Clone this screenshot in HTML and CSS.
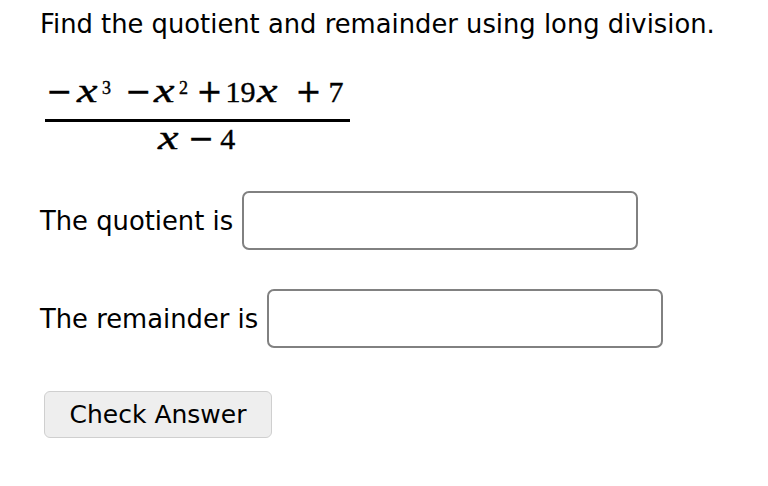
FILE: index.html
```html
<!DOCTYPE html>
<html>
<head>
<meta charset="utf-8">
<link rel="stylesheet" href="styles.css">
</head>
<body>
<div class="page">
  <p class="prompt">Find the quotient and remainder using long division.</p>
  <div class="frac">
    <div class="num">
      <span class="op">−</span>
      <span class="v">x</span>
      <span class="sup">3</span>
      <span class="op">−</span>
      <span class="v">x</span>
      <span class="sup">2</span>
      <span class="op">+</span>
      <span class="n">19</span>
      <span class="v">x</span>
      <span class="op">+</span>
      <span class="n">7</span>
    </div>
    <div class="den">
      <span class="v">x</span>
      <span class="op">−</span>
      <span class="n">4</span>
    </div>
  </div>
  <div class="row r1"><span class="label">The quotient is</span><input class="box" type="text"></div>
  <div class="row r2"><span class="label">The remainder is</span><input class="box" type="text"></div>
  <button class="check">Check Answer</button>
</div>
</body>
</html>
```
FILE: styles.css
```css
html, body { margin: 0; padding: 0; background: #fff; }
.page {
  padding: 7px 0 0 40px;
  font-family: "DejaVu Sans", sans-serif;
  color: #000;
}
.prompt { margin: 0; font-size: 25.8px; line-height: 34px; }
.frac {
  display: inline-flex;
  flex-direction: column;
  align-items: center;
  margin: 30px 0 0 5px;
  width: 305px;
  -webkit-text-stroke: 0.4px #000;
}
.num {
  display: grid;
  grid-template-columns: 30px 25.5px 23.5px 28px 25.5px 17.5px 29px 31px 39px 33px 20px;
  align-items: baseline;
  width: 305px;
  box-sizing: border-box;
  padding: 2px 0 5px 1.5px;
  border-bottom: 3px solid #000;
  line-height: 36px;
}
.den {
  display: grid;
  grid-template-columns: 30.5px 32px 17px;
  align-items: baseline;
  padding-top: 0;
  line-height: 33px;
}
.op { font-family: "DejaVu Serif", serif; font-size: 31px; }
.v {
  display: inline-block;
  font-family: "Liberation Serif", serif; font-style: italic; font-size: 33px;
  transform-origin: 0 100%;
  transform: scaleX(1.4);
}
.n { font-family: "Liberation Serif", serif; font-size: 30px; }
.sup {
  font-family: "Liberation Serif", serif; font-size: 18px;
  position: relative; top: -8px;
}
.row { display: flex; align-items: center; }
.label { font-size: 25.8px; margin-right: 9px; }
.box {
  width: 396px; height: 59px; box-sizing: border-box;
  border: 2px solid #818181; border-radius: 7px;
  margin: 0; padding: 0; background: #fff;
}
.r1 { margin-top: 36px; }
.r2 { margin-top: 39px; }
.check {
  display: block;
  margin: 43px 0 0 4px;
  width: 228px; height: 47px;
  background: #eeeeee;
  border: 1.5px solid #cfcfcf; border-radius: 6px;
  font-family: "DejaVu Sans", sans-serif; font-size: 25px; color: #000;
}
```
